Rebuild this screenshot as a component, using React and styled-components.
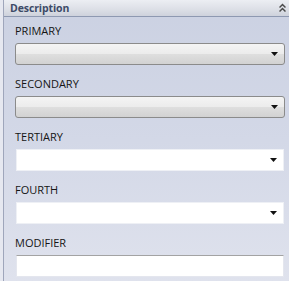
import styled, { createGlobalStyle } from "styled-components";

const GlobalStyle = createGlobalStyle`
  html, body {
    margin: 0;
    padding: 0;
    width: 289px;
    height: 281px;
    overflow: hidden;
  }
  #root {
    height: 281px;
  }
`;

const Frame = styled.div`
  display: flex;
  height: 281px;
  font-family: "Open Sans", "Noto Sans", sans-serif;
  background: #e6e8f0;
`;

const Panel = styled.div`
  flex: 1;
  margin-left: 3px;
  border-left: 1px solid #9fa6bb;
  display: flex;
  flex-direction: column;
  background: linear-gradient(to bottom, #cbd1e2 0%, #d3d8e7 50%, #dfe2ed 100%);
`;

const Header = styled.div`
  height: 16px;
  display: flex;
  align-items: center;
  justify-content: space-between;
  padding: 0 3px 0 6px;
  border-bottom: 1px solid #8e99b1;
  background: linear-gradient(to bottom, #eceef3 0%, #dcdfe6 60%, #ced2dc 100%);
`;

const Title = styled.span`
  font-size: 10.5px;
  font-weight: 700;
  letter-spacing: -0.1px;
  color: #3c4a67;
  line-height: 16px;
`;

const Body = styled.div`
  display: flex;
  flex-direction: column;
  gap: 11px;
  padding: 6px 4px 0 11px;
`;

const Field = styled.div`
  display: flex;
  flex-direction: column;
`;

const Label = styled.label`
  font-size: 11px;
  line-height: 16px;
  color: #151515;
  margin-bottom: 4px;
`;

const Control = styled.div`
  box-sizing: border-box;
  height: 22px;
  display: flex;
  align-items: center;
  justify-content: flex-end;
  padding-right: 6px;
  ${(p) =>
    p.$variant === "button"
      ? `
    border: 1px solid #8b8b8b;
    border-radius: 3px;
    background: linear-gradient(to bottom, #f4f4f4 0%, #ececec 48%, #dedede 52%, #d2d2d2 100%);
  `
      : p.$variant === "text"
      ? `
    margin: 0 1px;
    border: 1px solid #e4e6ee;
    border-top-color: #a3a3a3;
    background: #ffffff;
  `
      : `
    margin: 0 1px;
    border: 1px solid #eef0f5;
    background: #ffffff;
  `}
`;

const Arrow = () => (
  <svg width="7" height="4" viewBox="0 0 7 4">
    <path d="M0 0 H7 L3.5 4 Z" fill="#111" />
  </svg>
);

const Collapse = () => (
  <svg width="7" height="10" viewBox="0 0 7 10">
    <path d="M0.5 4.5 L3.5 1.5 L6.5 4.5 M0.5 8.5 L3.5 5.5 L6.5 8.5" stroke="#4a4a4a" strokeWidth="1.5" fill="none" />
  </svg>
);

const fields = [
  { label: "PRIMARY", variant: "button", dropdown: true },
  { label: "SECONDARY", variant: "button", dropdown: true },
  { label: "TERTIARY", variant: "plain", dropdown: true },
  { label: "FOURTH", variant: "plain", dropdown: true },
  { label: "MODIFIER", variant: "text", dropdown: false },
];

export default function App() {
  return (
    <>
      <GlobalStyle />
      <Frame>
        <Panel>
          <Header>
            <Title>Description</Title>
            <Collapse />
          </Header>
          <Body>
            {fields.map((f) => (
              <Field key={f.label}>
                <Label>{f.label}</Label>
                <Control $variant={f.variant}>{f.dropdown && <Arrow />}</Control>
              </Field>
            ))}
          </Body>
        </Panel>
      </Frame>
    </>
  );
}
